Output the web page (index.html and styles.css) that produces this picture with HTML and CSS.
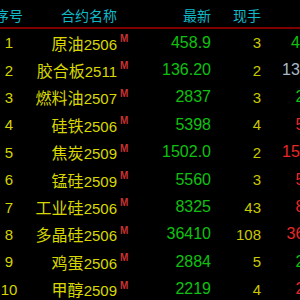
FILE: index.html
```html
<!DOCTYPE html>
<html lang="zh-CN">
<head>
<meta charset="UTF-8">
<meta name="viewport" content="width=device-width, initial-scale=1.0">
<title>行情列表</title>
<link rel="stylesheet" href="styles.css">
</head>
<body>

<div class="quote-table">
    <div class="quote-head">
        <div class="col-idx">序号</div>
        <div class="col-name">合约名称</div>
        <div></div>
        <div class="col-num">最新</div>
        <div class="col-num">现手</div>
        <div class="col-num">买价</div>
    </div>

    <div class="quote-row">
        <div class="col-idx">1</div>
        <div class="col-name">原油<span class="code">2506</span></div>
        <div class="mark">M</div>
        <div class="col-num down">458.9</div>
        <div class="col-num vol">3</div>
        <div class="col-num down">458.8</div>
    </div>
    <div class="quote-row">
        <div class="col-idx">2</div>
        <div class="col-name">胶合板<span class="code">2511</span></div>
        <div class="mark">M</div>
        <div class="col-num down">136.20</div>
        <div class="col-num vol">2</div>
        <div class="col-num flat">136.15</div>
    </div>
    <div class="quote-row">
        <div class="col-idx">3</div>
        <div class="col-name">燃料油<span class="code">2507</span></div>
        <div class="mark">M</div>
        <div class="col-num down">2837</div>
        <div class="col-num vol">3</div>
        <div class="col-num down">2836</div>
    </div>
    <div class="quote-row">
        <div class="col-idx">4</div>
        <div class="col-name">硅铁<span class="code">2506</span></div>
        <div class="mark">M</div>
        <div class="col-num down">5398</div>
        <div class="col-num vol">4</div>
        <div class="col-num up">5396</div>
    </div>
    <div class="quote-row">
        <div class="col-idx">5</div>
        <div class="col-name">焦炭<span class="code">2509</span></div>
        <div class="mark">M</div>
        <div class="col-num down">1502.0</div>
        <div class="col-num vol">2</div>
        <div class="col-num up">1501.5</div>
    </div>
    <div class="quote-row">
        <div class="col-idx">6</div>
        <div class="col-name">锰硅<span class="code">2509</span></div>
        <div class="mark">M</div>
        <div class="col-num down">5560</div>
        <div class="col-num vol">3</div>
        <div class="col-num up">5558</div>
    </div>
    <div class="quote-row">
        <div class="col-idx">7</div>
        <div class="col-name">工业硅<span class="code">2506</span></div>
        <div class="mark">M</div>
        <div class="col-num down">8325</div>
        <div class="col-num vol">43</div>
        <div class="col-num up">8320</div>
    </div>
    <div class="quote-row">
        <div class="col-idx">8</div>
        <div class="col-name">多晶硅<span class="code">2506</span></div>
        <div class="mark">M</div>
        <div class="col-num down">36410</div>
        <div class="col-num vol">108</div>
        <div class="col-num up">36400</div>
    </div>
    <div class="quote-row">
        <div class="col-idx">9</div>
        <div class="col-name">鸡蛋<span class="code">2506</span></div>
        <div class="mark">M</div>
        <div class="col-num down">2884</div>
        <div class="col-num vol">5</div>
        <div class="col-num down">2883</div>
    </div>
    <div class="quote-row">
        <div class="col-idx">10</div>
        <div class="col-name">甲醇<span class="code">2509</span></div>
        <div class="mark">M</div>
        <div class="col-num down">2219</div>
        <div class="col-num vol">4</div>
        <div class="col-num up">2218</div>
    </div>
</div>

</body>
</html>
```

FILE: styles.css
```css
html, body {
    margin: 0;
    padding: 0;
    background-color: #000;
    overflow: hidden;
}
body {
    width: 300px;
    height: 300px;
    font-family: "Liberation Sans", "Noto Sans CJK SC", sans-serif;
}
.quote-table {
    width: 342px;
    margin-left: -11px;
}
.quote-head,
.quote-row {
    display: grid;
    grid-template-columns: 40px 88px 23px 71px 50px 70px;
    align-items: center;
    white-space: nowrap;
}
.quote-head {
    height: 29px;
    box-sizing: border-box;
    padding-top: 2px;
    border-bottom: 2px solid #800000;
    color: #10b8c8;
    font-size: 14px;
}
.quote-row {
    height: 27.4px;
    font-size: 16px;
}
.col-idx {
    text-align: center;
}
.quote-row .col-idx {
    color: #d4d400;
    font-size: 15px;
}
.col-name {
    text-align: right;
}
.quote-row .col-name {
    color: #d8d800;
}
.code {
    font-size: 15px;
}
.mark {
    align-self: start;
    padding-top: 4px;
    padding-left: 3px;
    color: #c83232;
    font-size: 10px;
    font-weight: bold;
    line-height: 12px;
}
.col-num {
    text-align: right;
}
.vol {
    color: #c8c800;
    font-size: 15px;
}
.down {
    color: #10c010;
}
.up {
    color: #e82828;
}
.flat {
    color: #a8b8c8;
}
```
